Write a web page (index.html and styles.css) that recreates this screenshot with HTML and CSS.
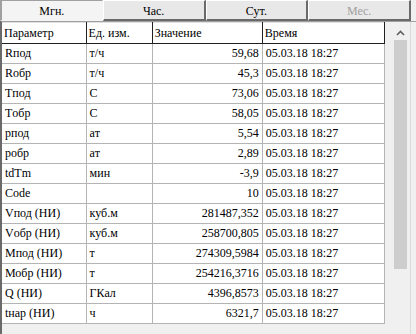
FILE: index.html
```html
<!DOCTYPE html>
<html>
<head>
  <meta charset="UTF-8">
  <title>Параметры</title>
  <link rel="stylesheet" href="styles.css">
</head>
<body>
  <div class="tabs">
    <div class="tab active">Мгн.</div>
    <div class="tab">Час.</div>
    <div class="tab">Сут.</div>
    <div class="tab disabled">Мес.</div>
  </div>

  <div class="frame">
    <table class="grid">
      <colgroup>
        <col class="c-name">
        <col class="c-unit">
        <col class="c-val">
        <col class="c-time">
      </colgroup>
      <thead>
        <tr>
          <th>Параметр</th>
          <th>Ед. изм.</th>
          <th>Значение</th>
          <th>Время</th>
        </tr>
      </thead>
      <tbody>
        <tr><td>Rпод</td><td>т/ч</td><td class="num">59,68</td><td>05.03.18 18:27</td></tr>
        <tr><td>Rобр</td><td>т/ч</td><td class="num">45,3</td><td>05.03.18 18:27</td></tr>
        <tr><td>Tпод</td><td>C</td><td class="num">73,06</td><td>05.03.18 18:27</td></tr>
        <tr><td>Tобр</td><td>C</td><td class="num">58,05</td><td>05.03.18 18:27</td></tr>
        <tr><td>рпод</td><td>ат</td><td class="num">5,54</td><td>05.03.18 18:27</td></tr>
        <tr><td>робр</td><td>ат</td><td class="num">2,89</td><td>05.03.18 18:27</td></tr>
        <tr><td>tdTm</td><td>мин</td><td class="num">-3,9</td><td>05.03.18 18:27</td></tr>
        <tr><td>Code</td><td></td><td class="num">10</td><td>05.03.18 18:27</td></tr>
        <tr><td>Vпод (НИ)</td><td>куб.м</td><td class="num">281487,352</td><td>05.03.18 18:27</td></tr>
        <tr><td>Vобр (НИ)</td><td>куб.м</td><td class="num">258700,805</td><td>05.03.18 18:27</td></tr>
        <tr><td>Мпод (НИ)</td><td>т</td><td class="num">274309,5984</td><td>05.03.18 18:27</td></tr>
        <tr><td>Мобр (НИ)</td><td>т</td><td class="num">254216,3716</td><td>05.03.18 18:27</td></tr>
        <tr><td>Q (НИ)</td><td>ГКал</td><td class="num">4396,8573</td><td>05.03.18 18:27</td></tr>
        <tr><td>tнар (НИ)</td><td>ч</td><td class="num">6321,7</td><td>05.03.18 18:27</td></tr>
      </tbody>
    </table>

    <div class="scrollbar">
      <div class="arrow">
        <svg width="9" height="6" viewBox="0 0 9 6"><path d="M1 5 L4.5 1.5 L8 5" fill="none" stroke="#606060" stroke-width="1.6"/></svg>
      </div>
      <div class="thumb"></div>
      <div class="track"></div>
    </div>
  </div>
</body>
</html>
```

FILE: styles.css
```css
* {
	margin: 0;
	padding: 0;
	box-sizing: border-box;
}

body {
	width: 416px;
	height: 334px;
	overflow: hidden;
	background: #f0f0f0;
	font-family: "Liberation Serif", serif;
	font-size: 12px;
	color: black;
}

.tabs {
	display: flex;
	height: 21px;
	padding-right: 5px;
}

.tab {
	flex: 1;
	text-align: center;
	line-height: 19px;
	padding-top: 1px;
	background: #e8e8e8;
	border-top: 1px solid #ffffff;
	border-left: 1px solid #ffffff;
	border-right: 2px solid #6a6a6a;
	border-bottom: 2px solid #6a6a6a;
}

.tab.active {
	background: #f4f4f4;
	border-top: 1px solid #a0a0a0;
	border-left: 2px solid #a0a0a0;
	border-right: 1px solid #f4f4f4;
	border-bottom: 1px solid #f4f4f4;
}

.tab.disabled {
	color: #a0a0a0;
}

.frame {
	display: flex;
	height: 313px;
	border-left: 2px solid #6a6a6a;
	border-top: 1px solid #a0a0a0;
	background: #f0f0f0;
}

.grid {
	border-collapse: collapse;
	table-layout: fixed;
	width: 383px;
	align-self: flex-start;
	background: white;
}

.c-name { width: 84px; }
.c-unit { width: 66px; }
.c-val { width: 110px; }
.c-time { width: 122px; }

.grid th {
	height: 21px;
	font-weight: normal;
	text-align: left;
	padding: 0 2px;
	border-right: 1px solid #202020;
	border-bottom: 1px solid #202020;
	border-top: 1px solid #e0e0e0;
	white-space: nowrap;
}

.grid td {
	height: 20px;
	padding: 0 2px 0 3px;
	border-right: 1px solid #b4b4b4;
	border-bottom: 1px solid #b4b4b4;
	white-space: nowrap;
	overflow: hidden;
}

.grid td.num {
	text-align: right;
	padding-right: 3px;
	padding-left: 0;
}

.scrollbar {
	display: flex;
	flex-direction: column;
	width: 22px;
	margin-left: 4px;
	padding: 0 3px 0 5px;
	border-right: 1px solid #dcdcdc;
}

.arrow {
	height: 18px;
	display: flex;
	align-items: center;
	justify-content: center;
	padding-top: 4px;
}

.thumb {
	height: 229px;
	background: #cdcdcd;
}

.track {
	flex: 1;
}
```
